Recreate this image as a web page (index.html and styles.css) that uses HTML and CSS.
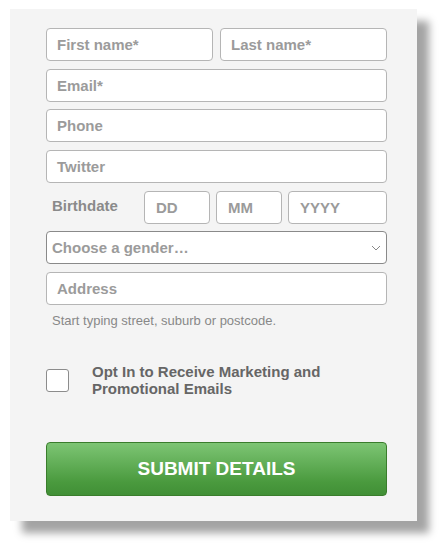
FILE: index.html
```html
<!DOCTYPE html>
<html>
<head>
<meta charset="utf-8">
<link rel="stylesheet" href="styles.css">
</head>
<body>
<form class="panel">
  <div class="row two">
    <div class="field"><span class="ph">First name*</span></div>
    <div class="field"><span class="ph">Last name*</span></div>
  </div>
  <div class="field"><span class="ph">Email*</span></div>
  <div class="field"><span class="ph">Phone</span></div>
  <div class="field"><span class="ph">Twitter</span></div>
  <div class="row birth">
    <span class="label">Birthdate</span>
    <div class="field"><span class="ph">DD</span></div>
    <div class="field"><span class="ph">MM</span></div>
    <div class="field"><span class="ph">YYYY</span></div>
  </div>
  <div class="field select">
    <span class="ph">Choose a gender…</span>
    <svg class="chev" width="10" height="6" viewBox="0 0 10 6"><path d="M1 1 L5 5 L9 1" fill="none" stroke="#888" stroke-width="1"/></svg>
  </div>
  <div class="field"><span class="ph">Address</span></div>
  <p class="help">Start typing street, suburb or postcode.</p>
  <div class="optin">
    <span class="check"></span>
    <span class="optlabel">Opt In to Receive Marketing and Promotional Emails</span>
  </div>
  <button type="button" class="submit">SUBMIT DETAILS</button>
</form>
</body>
</html>
```
FILE: styles.css
```css
* { box-sizing: border-box; }
html, body { background: #fff; }
body {
  margin: 0;
  min-height: 551px;
  padding: 9px 0 30px 10px;
  font-family: "Liberation Sans", Arial, sans-serif;
}
.panel {
  width: 407px;
  height: 512px;
  background: #f4f4f4;
  padding: 19px 30px 0 36px;
  box-shadow: 12px 12px 8px rgba(0,0,0,0.36);
  display: flex;
  flex-direction: column;
  gap: 7.7px;
}
.row { display: flex; gap: 7px; }
.row .field { flex: 1; }
.field {
  height: 33px;
  flex: none;
  background: #fff;
  border: 1px solid #b5b5b5;
  border-radius: 4px;
  display: flex;
  align-items: center;
  padding-left: 10px;
}
.ph {
  font-size: 15px;
  font-weight: bold;
  color: #9b9b9b;
}
.birth { gap: 6px; }
.birth .label {
  width: 93px;
  padding-left: 6px;
  font-size: 15px;
  font-weight: bold;
  color: #8a8a8a;
  display: flex;
  align-items: center;
  margin-top: -3px;
}
.birth .field { flex: none; width: 66px; padding-left: 11px; }
.birth .field:last-child { width: 99px; }
.select {
  border-color: #8a8a8a;
  padding-left: 5px;
  justify-content: space-between;
  padding-right: 5px;
}
.chev { margin-top: 1px; }
.help {
  margin: 0 0 0 6px;
  font-size: 13px;
  color: #888;
}
.optin {
  display: flex;
  align-items: center;
  margin-top: 29px;
  gap: 23px;
}
.check {
  width: 23px;
  height: 23px;
  flex: none;
  background: #fff;
  border: 1px solid #8c8c8c;
  border-radius: 3px;
}
.optlabel {
  font-size: 15px;
  font-weight: bold;
  color: #666;
  line-height: 17px;
  width: 250px;
  margin-top: -2px;
}
.submit {
  margin-top: 38px;
  height: 54px;
  flex: none;
  border: 1px solid #3a7d2c;
  border-radius: 4px;
  background: linear-gradient(#7dc574, #4a9a3e 75%, #418f36);
  color: #fff;
  font-family: "Liberation Sans", Arial, sans-serif;
  font-size: 19px;
  font-weight: bold;
  padding: 0;
}
```
